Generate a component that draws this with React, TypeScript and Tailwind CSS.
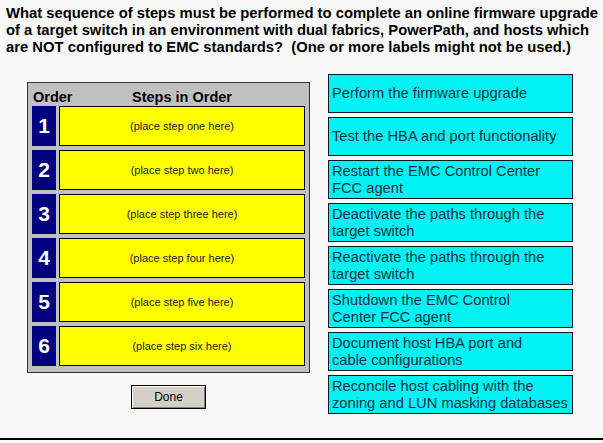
const steps = ["one", "two", "three", "four", "five", "six"];

// each label keeps its own line breaks
const labels = [
  ["Perform the firmware upgrade"],
  ["Test the HBA and port functionality"],
  ["Restart the EMC Control Center", "FCC agent"],
  ["Deactivate the paths through the", "target switch"],
  ["Reactivate the paths through the", "target switch"],
  ["Shutdown the EMC Control", "Center FCC agent"],
  ["Document host HBA port and", "cable configurations"],
  ["Reconcile host cabling with the", "zoning and LUN masking databases"],
];

const question = [
  "What sequence of steps must be performed to complete an online firmware upgrade",
  "of a target switch in an environment with dual fabrics, PowerPath, and hosts which",
  "are NOT configured to EMC standards?\u00a0 (One or more labels might not be used.)",
];

export default function App() {
  return (
    <div
      className="flex h-[443px] w-[603px] flex-col bg-[#f8f8f8] text-black"
      style={{ fontFamily: '"Liberation Sans", Arial, sans-serif' }}
    >
      <div className="px-[6px] pt-[5px] text-[14.8px] font-bold leading-[17px]">
        {question.map((q) => (
          <p key={q} className="whitespace-nowrap">
            {q}
          </p>
        ))}
      </div>

      <div className="mt-[18px] flex flex-1 items-start pl-[27px]">
        {/* ordering panel */}
        <div className="mt-[8px] flex w-[283px] flex-col items-center">
          <div className="w-full border border-[#333] bg-[#c0c0c0] pb-[6px] pl-[4px] pr-[4px]">
            <div className="flex h-[23px] items-end pb-[1px] text-[14.5px] font-bold leading-[16px]">
              <span className="w-[27px] pl-[1px]">Order</span>
              <span className="flex-1 text-center">Steps in Order</span>
            </div>
            <div className="flex flex-col gap-[4px]">
              {steps.map((s, i) => (
                <div key={s} className="flex h-[40px] gap-[3px]">
                  <div className="flex w-[24px] items-center justify-center bg-[#000080] text-[21px] font-bold text-white">
                    {i + 1}
                  </div>
                  <div className="flex flex-1 items-center justify-center border border-black bg-[#ffff00] text-[11px] text-[#222]">
                    (place step {s} here)
                  </div>
                </div>
              ))}
            </div>
          </div>
          <button className="mt-[12px] h-[24px] w-[75px] border border-black bg-[#d4d0c8] text-[12px] shadow-[inset_1px_1px_0_#fff,inset_-1px_-1px_0_#808080]">
            Done
          </button>
        </div>

        {/* label pool */}
        <div className="ml-[18px] flex w-[245px] flex-col gap-[4px]">
          {labels.map((l) => (
            <div
              key={l[0]}
              className="flex h-[39px] flex-col justify-center border border-[#0a1a20] bg-[#00f2f2] px-[3px] text-[14.7px] leading-[17px] text-[#1c3040]"
            >
              {l.map((line) => (
                <span key={line} className="whitespace-nowrap">
                  {line}
                </span>
              ))}
            </div>
          ))}
        </div>
      </div>

      <div className="mb-[3px] h-[2px] w-full bg-black" />
    </div>
  );
}
